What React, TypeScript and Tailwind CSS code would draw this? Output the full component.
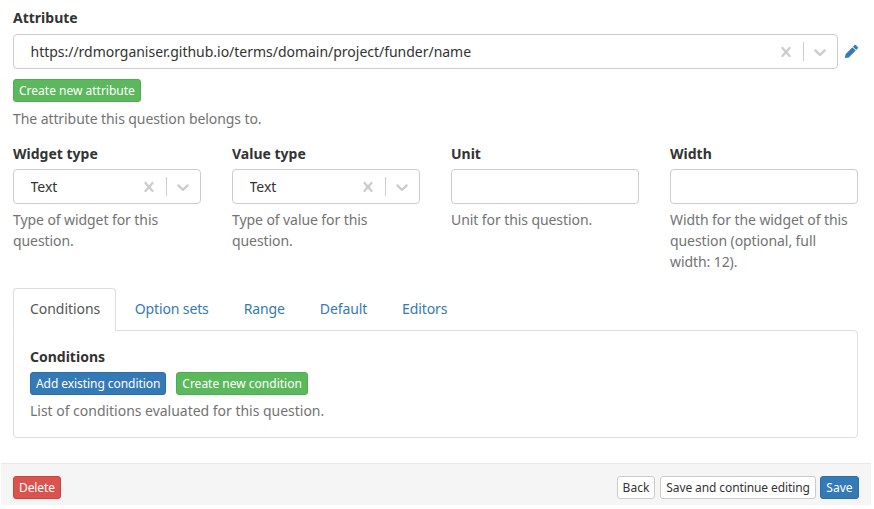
import React from "react";

function Caret() {
  return (
    <svg viewBox="0 0 20 20" className="w-[20px] h-[20px] fill-[#cccccc]">
      <path d="M4.516 7.548c0.436-0.446 1.043-0.481 1.576 0l3.908 3.747 3.908-3.747c0.533-0.481 1.141-0.446 1.574 0 0.436 0.445 0.408 1.197 0 1.615-0.406 0.418-4.695 4.502-4.695 4.502-0.217 0.223-0.502 0.335-0.787 0.335s-0.57-0.112-0.789-0.335c0 0-4.287-4.084-4.695-4.502s-0.436-1.17 0-1.615z" />
    </svg>
  );
}

function Cross() {
  return (
    <svg viewBox="0 0 20 20" className="w-[20px] h-[20px] fill-[#cccccc]">
      <path d="M14.348 14.849c-0.469 0.469-1.229 0.469-1.697 0l-2.651-3.030-2.651 3.029c-0.469 0.469-1.229 0.469-1.697 0-0.469-0.469-0.469-1.229 0-1.697l2.758-3.15-2.759-3.152c-0.469-0.469-0.469-1.228 0-1.697s1.228-0.469 1.697 0l2.652 3.031 2.651-3.031c0.469-0.469 1.228-0.469 1.697 0s0.469 1.229 0 1.697l-2.758 3.152 2.758 3.15c0.469 0.469 0.469 1.229 0 1.698z" />
    </svg>
  );
}

function Select({ value }: { value: string }) {
  return (
    <div className="h-[35px] border border-[#cccccc] rounded-[4px] bg-white flex items-center pl-[16.5px] pr-[7px]">
      <span className="flex-1 text-[14px] tracking-[-0.02px] text-[#333333] truncate">{value}</span>
      <Cross />
      <span className="w-px h-[19px] bg-[#cccccc] ml-[7px] mr-[6px]" />
      <Caret />
    </div>
  );
}

function Field({ label, help, value }: { label: string; help: string; value?: string }) {
  return (
    <div className="w-[188px]">
      <div className="text-[14px] font-bold text-[#333333] leading-[20px] mb-[5px]">{label}</div>
      {value ? <Select value={value} /> : <div className="h-[35px] border border-[#cccccc] rounded-[4px] bg-white" />}
      <p className="mt-[5px] text-[14px] leading-[21px] tracking-[-0.08px] text-[#737373]">{help}</p>
    </div>
  );
}

function Btn({ children, className }: { children: React.ReactNode; className: string }) {
  return (
    <button className={"h-[23px] text-[12px] leading-[18px] rounded-[3px] border whitespace-nowrap " + className}>
      {children}
    </button>
  );
}

export default function App() {
  return (
    <div className="w-[874px] h-[509px] bg-white overflow-hidden font-['Noto_Sans','Open_Sans',sans-serif]">
      <div className="pl-[13px] pr-[15px] pt-[8px]">
        <div className="text-[14px] font-bold text-[#333333] leading-[20px] mb-[6px]">Attribute</div>
        <div className="flex items-center">
          <div className="w-[825px]"><Select value="https://rdmorganiser.github.io/terms/domain/project/funder/name" /></div>
          <svg viewBox="0 0 512 512" className="w-[13px] h-[13px] ml-[7px] fill-[#337ab7]">
            <path d="M497.9 142.1l-46.1 46.1c-4.7 4.7-12.3 4.7-17 0l-111-111c-4.7-4.7-4.7-12.3 0-17l46.1-46.1c18.7-18.7 49.1-18.7 67.9 0l60.1 60.1c18.8 18.7 18.8 49.1 0 67.9zM284.2 99.8L21.6 362.4.4 483.9c-2.9 16.4 11.4 30.6 27.8 27.8l121.5-21.3 262.6-262.6c4.7-4.7 4.7-12.3 0-17l-111-111c-4.8-4.7-12.4-4.7-17.1 0z" />
          </svg>
        </div>
        <Btn className="mt-[10px] block px-[5px] bg-[#5cb85c] border-[#4cae4c] text-white">Create new attribute</Btn>
        <p className="mt-[6px] text-[14px] leading-[21px] tracking-[-0.08px] text-[#737373]">The attribute this question belongs to.</p>

        <div className="mt-[15px] flex gap-[31px]">
          <Field label="Widget type" value="Text" help="Type of widget for this question." />
          <Field label="Value type" value="Text" help="Type of value for this question." />
          <Field label="Unit" help="Unit for this question." />
          <Field label="Width" help="Width for the widget of this question (optional, full width: 12)." />
        </div>

        <div className="mt-[16px] w-[845px]">
          <div className="flex h-[43px] relative z-10 text-[14px]">
            <div className="h-[43px] pl-[16px] pr-[15px] pb-[2px] flex items-center border border-[#dddddd] border-b-white rounded-t-[4px] bg-white tracking-[-0.05px] text-[#555555]">Conditions</div>
            {["Option sets", "Range", "Default", "Editors"].map((t) => (
              <div key={t} className="h-[42px] ml-[2px] px-[16.5px] pb-[1px] flex items-center tracking-[-0.12px] text-[#337ab7]">{t}</div>
            ))}
          </div>
          <div className="-mt-px h-[108px] border border-[#dddddd] rounded-b-[4px] rounded-tr-[4px] px-[16px] pt-[16px]">
            <div className="text-[14px] font-bold text-[#333333] leading-[20px] mb-[5px]">Conditions</div>
            <div className="flex gap-[10px]">
              <Btn className="px-[5px] bg-[#337ab7] border-[#2e6da4] text-white tracking-[-0.06px]">Add existing condition</Btn>
              <Btn className="px-[5px] bg-[#5cb85c] border-[#4cae4c] text-white">Create new condition</Btn>
            </div>
            <p className="mt-[5px] text-[14px] leading-[21px] tracking-[-0.02px] text-[#737373]">List of conditions evaluated for this question.</p>
          </div>
        </div>
      </div>

      <div className="mt-[25px] ml-[1px] w-[870px] h-[42px] bg-[#f5f5f5] border-t border-[#e7e7e7] flex items-start pt-[12px] pl-[12px] pr-[12px]">
        <Btn className="px-[5px] bg-[#d9534f] border-[#d43f3a] text-white tracking-[-0.1px]">Delete</Btn>
        <div className="ml-auto flex gap-[4px]">
          <Btn className="px-[5px] bg-white border-[#cccccc] text-[#333333] mr-[1px]">Back</Btn>
          <Btn className="px-[5px] bg-white border-[#cccccc] text-[#333333] tracking-[-0.1px]">Save and continue editing</Btn>
          <Btn className="px-[5.5px] bg-[#337ab7] border-[#2e6da4] text-white">Save</Btn>
        </div>
      </div>
    </div>
  );
}
